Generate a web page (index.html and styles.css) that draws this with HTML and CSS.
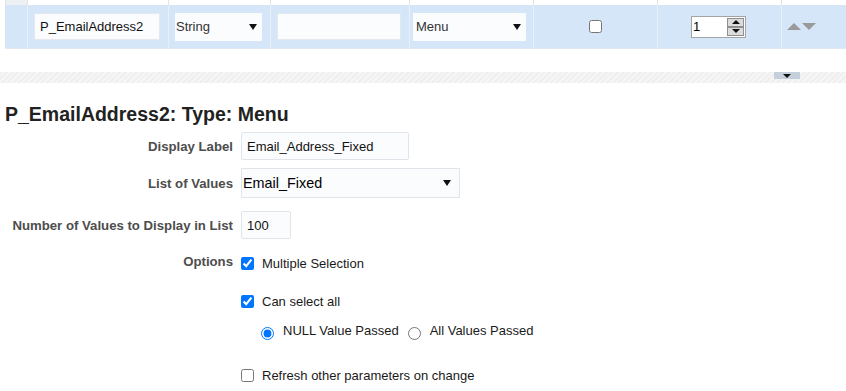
FILE: index.html
```html
<!DOCTYPE html>
<html lang="en">
  <head>
    <meta charset="UTF-8" />
    <meta name="viewport" content="width=device-width, initial-scale=1.0" />
    <title>Parameter Properties</title>
    <link rel="stylesheet" href="styles.css">
  </head>
  <body>
    <!--==================== PARAMETER GRID ====================-->
    <div class="grid">
      <div class="grid__head">
        <div class="grid__cell grid__cell--corner"></div>
        <div class="grid__cell"></div>
        <div class="grid__cell"></div>
        <div class="grid__cell"></div>
        <div class="grid__cell"></div>
        <div class="grid__cell"></div>
        <div class="grid__cell"></div>
        <div class="grid__cell"></div>
      </div>
      <div class="grid__row">
        <div class="grid__cell"></div>
        <div class="grid__cell">
          <input class="cell-input cell-input--name" type="text" value="P_EmailAddress2" />
        </div>
        <div class="grid__cell">
          <div class="cell-select cell-select--type">
            <span>String</span><span class="caret"></span>
          </div>
        </div>
        <div class="grid__cell">
          <input class="cell-input cell-input--blank" type="text" value="" />
        </div>
        <div class="grid__cell grid__cell--tight">
          <div class="cell-select cell-select--menu">
            <span>Menu</span><span class="caret"></span>
          </div>
        </div>
        <div class="grid__cell grid__cell--center">
          <input class="cell-check" type="checkbox" />
        </div>
        <div class="grid__cell grid__cell--center">
          <div class="spinner">
            <span class="spinner__value">1</span>
            <div class="spinner__buttons">
              <span class="spinner__btn"><span class="tri tri--up"></span></span>
              <span class="spinner__btn"><span class="tri tri--down"></span></span>
            </div>
          </div>
        </div>
        <div class="grid__cell grid__cell--order">
          <span class="order order--up"></span>
          <span class="order order--down"></span>
        </div>
      </div>
    </div>

    <div class="splitter">
      <span class="splitter__tab"><span class="tri tri--down"></span></span>
    </div>

    <!--==================== PROPERTIES ====================-->
    <section class="props">
      <h2 class="props__title">P_EmailAddress2: Type: Menu</h2>

      <div class="field field--label">
        <label class="field__label">Display Label</label>
        <input class="text-input text-input--label" type="text" value="Email_Address_Fixed" />
      </div>

      <div class="field field--lov">
        <label class="field__label">List of Values</label>
        <div class="lov-select">
          <span>Email_Fixed</span><span class="caret"></span>
        </div>
      </div>

      <div class="field field--count">
        <label class="field__label">Number of Values to Display in List</label>
        <input class="text-input text-input--count" type="text" value="100" />
      </div>

      <div class="field field--options">
        <span class="field__label">Options</span>
        <div class="options">
          <label class="option option--multi">
            <input type="checkbox" checked />Multiple Selection
          </label>
          <label class="option option--all">
            <input type="checkbox" checked />Can select all
          </label>
          <div class="option option--radios">
            <label class="radio"><input type="radio" name="allvalue" checked />NULL Value Passed</label>
            <label class="radio"><input type="radio" name="allvalue" />All Values Passed</label>
          </div>
          <label class="option option--refresh">
            <input type="checkbox" />Refresh other parameters on change
          </label>
        </div>
      </div>
    </section>
  </body>
</html>
```

FILE: styles.css
```css
body {
  font-family: "Liberation Sans", Arial, sans-serif;
  font-size: 13px;
  color: #222;
  margin: 0;
  background-color: #fff;
}

/* grid */
.grid {
  margin-left: 5px;
}
.grid__head,
.grid__row {
  display: grid;
  grid-template-columns: 22px 141px 102px 139px 124px 124px 124px 1fr;
}
.grid__head {
  height: 5px;
}
.grid__head .grid__cell {
  border-left: 1px solid #e3e3e3;
}
.grid__cell--corner {
  background-color: #eef1f4;
}
.grid__row {
  height: 44px;
  background-color: #d5e6f9;
  border-bottom: 1px solid #e2e8ef;
  box-sizing: border-box;
}
.grid__row .grid__cell {
  border-left: 1px solid #e9f0f8;
  display: flex;
  align-items: center;
  padding-left: 6px;
}
.grid__row .grid__cell:first-child {
  border-left-color: #dde3ea;
}
.grid__cell--tight {
  padding-left: 3px !important;
}
.grid__cell--center {
  justify-content: center;
  padding-left: 0 !important;
}
.grid__cell--order {
  padding-left: 5px !important;
  gap: 0;
}

.cell-input {
  height: 27px;
  box-sizing: border-box;
  border: 1px solid #e4e9ef;
  background-color: #fbfcfe;
  font-family: inherit;
  font-size: 13px;
  color: #111;
  padding: 0 5px;
  margin: 0;
}
.cell-input--name {
  width: 126px;
}
.cell-input--blank {
  width: 124px;
}
.cell-select {
  height: 28px;
  box-sizing: border-box;
  background-color: #fbfcfe;
  display: flex;
  align-items: center;
  justify-content: space-between;
  padding: 0 5px 0 1px;
  color: #333;
}
.cell-select--type {
  width: 87px;
}
.cell-select--menu {
  width: 113px;
  padding-left: 3px;
}
.caret {
  width: 0;
  height: 0;
  border-left: 4.5px solid transparent;
  border-right: 4.5px solid transparent;
  border-top: 6px solid #111;
}
.cell-check {
  width: 13px;
  height: 13px;
  margin: 0;
}

.spinner {
  width: 55px;
  height: 22px;
  box-sizing: border-box;
  border: 1px solid #a4a4a4;
  background-color: #fff;
  display: flex;
  justify-content: space-between;
  margin-left: -2px;
}
.spinner__value {
  padding-left: 1px;
  line-height: 20px;
  font-size: 13px;
  color: #000;
}
.spinner__buttons {
  display: flex;
  flex-direction: column;
  padding: 1px;
}
.spinner__btn {
  width: 15px;
  height: 8px;
  border: 1px solid #8f8f8f;
  background-color: #dcdcdc;
  display: flex;
  align-items: center;
  justify-content: center;
}
.tri {
  width: 0;
  height: 0;
  border-left: 4px solid transparent;
  border-right: 4px solid transparent;
}
.tri--up {
  border-bottom: 4px solid #111;
}
.tri--down {
  border-top: 4px solid #111;
}
.order {
  width: 0;
  height: 0;
  border-left: 7px solid transparent;
  border-right: 7px solid transparent;
}
.order--up {
  border-bottom: 7px solid #9a9a9a;
}
.order--down {
  border-top: 7px solid #9a9a9a;
  margin-left: 1px;
}

/* splitter */
.splitter {
  margin-top: 23px;
  height: 11px;
  background: repeating-linear-gradient(135deg, #efefef 0 2px, #f6f6f6 2px 4px);
}
.splitter__tab {
  display: flex;
  justify-content: center;
  align-items: center;
  width: 26px;
  height: 7px;
  margin-left: 774px;
  background-color: #c6d0dc;
}

/* properties */
.props__title {
  margin: 20px 0 0 5px;
  font-size: 19.5px;
  line-height: 22px;
  font-weight: bold;
  color: #222;
}
.field {
  display: flex;
  align-items: center;
}
.field__label {
  width: 233px;
  margin-right: 8px;
  text-align: right;
  font-size: 13.2px;
  font-weight: bold;
  color: #4d4d4d;
}
.field--label {
  margin-top: 7px;
}
.field--lov {
  margin-top: 8px;
}
.field--count {
  margin-top: 13px;
}
.field--options {
  margin-top: 14px;
  align-items: flex-start;
}
.field--options .field__label {
  line-height: 20px;
  margin-top: -1px;
}
.text-input {
  height: 28px;
  box-sizing: border-box;
  border: 1px solid #e0e5eb;
  border-radius: 2px;
  background-color: #fbfcfe;
  font-family: inherit;
  font-size: 13px;
  color: #111;
  padding: 0 5px;
  margin: 0;
}
.text-input--label {
  width: 168px;
}
.text-input--count {
  width: 50px;
}
.lov-select {
  width: 219px;
  height: 30px;
  box-sizing: border-box;
  border: 1px solid #e0e5eb;
  background-color: #fbfcfe;
  display: flex;
  align-items: center;
  justify-content: space-between;
  padding: 0 8px 0 1px;
  font-size: 14.4px;
  color: #000;
}

.options {
  display: flex;
  flex-direction: column;
}
.option {
  display: flex;
  align-items: center;
  height: 20px;
  color: #1a1a1a;
}
.option input[type="checkbox"] {
  width: 13px;
  height: 13px;
  margin: 0 8px 0 0;
}
.option--all {
  margin-top: 18px;
}
.option--radios {
  margin-top: 9px;
  padding-left: 20px;
}
.option--refresh {
  margin-top: 25px;
}
.radio {
  display: flex;
  align-items: center;
  margin-right: 9px;
}
.radio input {
  width: 13px;
  height: 13px;
  margin: 6px 9px 0 0;
}
```
